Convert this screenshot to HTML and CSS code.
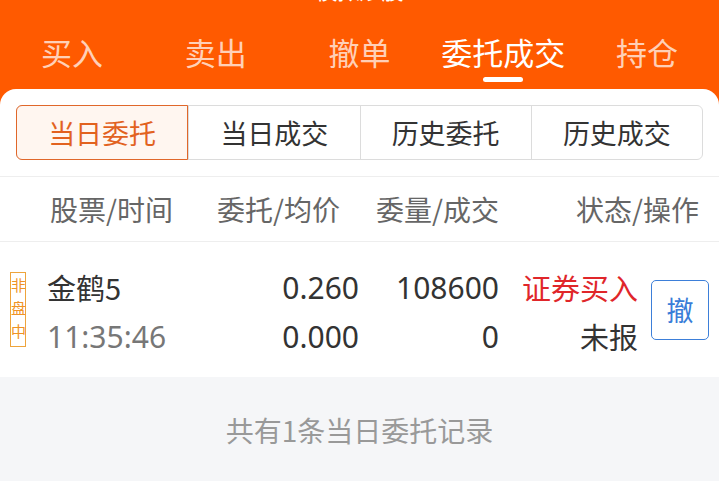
FILE: index.html
```html
<!DOCTYPE html>
<html lang="zh-CN">
<head>
  <meta charset="UTF-8">
  <meta name="viewport" content="width=device-width, initial-scale=1">
  <title>委托成交</title>
  <link rel="stylesheet" href="styles.css">
</head>
<body>
  <div class="page">
    <!-- 顶部导航 -->
    <div class="topbar">
      <div class="title">模拟炒股</div>
      <div class="tabs">
        <div class="tab">买入</div>
        <div class="tab">卖出</div>
        <div class="tab">撤单</div>
        <div class="tab active">委托成交<span class="bar"></span></div>
        <div class="tab">持仓</div>
      </div>
    </div>

    <div class="card">
      <!-- 分段切换 -->
      <div class="seg">
        <div class="seg-item active">当日委托</div>
        <div class="seg-item">当日成交</div>
        <div class="seg-item">历史委托</div>
        <div class="seg-item">历史成交</div>
      </div>

      <!-- 表头 -->
      <div class="head">
        <div class="h-cell left">股票/时间</div>
        <div class="h-cell">委托/均价</div>
        <div class="h-cell">委量/成交</div>
        <div class="h-cell">状态/操作</div>
      </div>

      <!-- 委托记录 -->
      <div class="order">
        <div class="badge">非<br>盘<br>中</div>
        <div class="cols">
          <div class="col name">
            <span class="stock">金鹤5</span>
            <span class="time digits">11:35:46</span>
          </div>
          <div class="col num">
            <span class="digits">0.260</span>
            <span class="digits">0.000</span>
          </div>
          <div class="col num">
            <span class="digits">108600</span>
            <span class="digits">0</span>
          </div>
          <div class="col num">
            <span class="buy">证券买入</span>
            <span>未报</span>
          </div>
        </div>
        <button class="cancel">撤</button>
      </div>

      <div class="footer">共有1条当日委托记录</div>
    </div>
  </div>
</body>
</html>
```

FILE: styles.css
```css
/* 基础 */
* {
  box-sizing: border-box;
}
body {
  margin: 0;
  font-family: "Noto Sans CJK SC", "Noto Sans", sans-serif;
  color: #333;
  background: #f5f6f8;
}
.page {
  display: flex;
  flex-direction: column;
  min-height: 481px;
  background: #ff5a00;
}

/* 顶部导航 */
.topbar {
  display: flex;
  flex-direction: column;
}
.title {
  margin-top: -24px;
  height: 26px;
  line-height: 26px;
  text-align: center;
  font-size: 22px;
  color: #fff;
}
.tabs {
  display: flex;
  padding-top: 30px;
}
.tab {
  flex: 1;
  display: flex;
  flex-direction: column;
  align-items: center;
  font-size: 31px;
  line-height: 40px;
  height: 57px;
  color: rgba(255, 255, 255, 0.72);
}
.tab.active {
  color: #fff;
}
.tab .bar {
  width: 40px;
  height: 5px;
  margin-top: 5px;
  border-radius: 3px;
  background: #fff;
}

/* 卡片 */
.card {
  flex: 1;
  display: flex;
  flex-direction: column;
  background: #fff;
  border-radius: 16px 16px 0 0;
  overflow: hidden;
}
.seg {
  display: flex;
  height: 55px;
  margin: 16px 16px;
  border: 1px solid #dcdcdc;
  border-radius: 6px;
}
.seg-item {
  flex: 1;
  display: flex;
  align-items: center;
  justify-content: center;
  font-size: 27px;
  color: #333;
  border-left: 1px solid #dcdcdc;
}
.seg-item:first-child {
  border-left: none;
}
.seg-item.active {
  margin: -1px 0 -1px -1px;
  border: 1px solid #e0672a;
  border-radius: 6px 0 0 6px;
  background: #fff6f0;
  color: #e2621f;
}

/* 表头 */
.head {
  display: grid;
  grid-template-columns: 156px 134px 159px 200px;
  align-items: center;
  height: 66px;
  padding: 0 20px 0 50px;
  border-top: 1px solid #eee;
  border-bottom: 1px solid #eee;
}
.h-cell {
  font-size: 28px;
  color: #666;
  text-align: right;
  white-space: nowrap;
}
.h-cell.left {
  text-align: left;
}

/* 委托行 */
.order {
  display: flex;
  align-items: center;
  height: 135px;
  padding: 0 10px;
  background: #fff;
}
.badge {
  width: 16px;
  height: 75px;
  margin-right: 21px;
  border: 1px solid #eea43c;
  font-size: 15px;
  line-height: 23px;
  text-align: center;
  color: #f09324;
}
.cols {
  display: grid;
  grid-template-columns: 203px 109px 140px 139px;
  padding-top: 4px;
}
.col {
  display: flex;
  flex-direction: column;
  font-size: 29px;
  line-height: 49px;
}
.col.num {
  align-items: flex-end;
}
.digits {
  font-family: "Noto Sans", "Noto Sans CJK SC", sans-serif;
  font-size: 30px;
}
.stock {
  color: #333;
}
.time {
  color: #777;
}
.buy {
  color: #e0262a;
}
.cancel {
  width: 58px;
  height: 60px;
  margin-left: 13px;
  padding: 0;
  border: 1.5px solid #3d7fd9;
  border-radius: 5px;
  background: #fff;
  font-family: inherit;
  font-size: 27px;
  color: #3a7dd8;
}

/* 底部 */
.footer {
  flex: 1;
  padding-top: 33px;
  background: #f5f6f8;
  text-align: center;
  font-size: 28px;
  line-height: 40px;
  color: #999;
}
```
